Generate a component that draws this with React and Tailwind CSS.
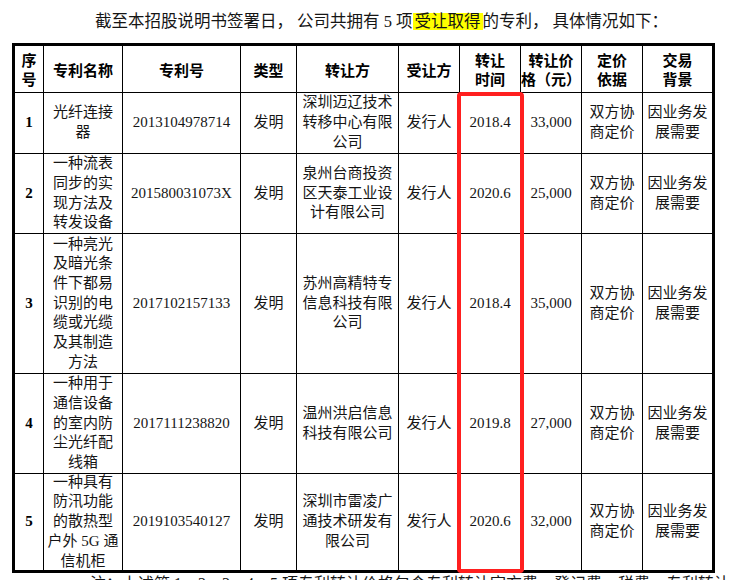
import React from "react";

const rows = [
    {
        no: "1",
        name: ["光纤连接", "器"],
        patent: "2013104978714",
        from: ["深圳迈辽技术", "转移中心有限", "公司"],
        date: "2018.4",
        price: "33,000",
    },
    {
        no: "2",
        name: ["一种流表", "同步的实", "现方法及", "转发设备"],
        patent: "201580031073X",
        from: ["泉州台商投资", "区天泰工业设", "计有限公司"],
        date: "2020.6",
        price: "25,000",
    },
    {
        no: "3",
        name: ["一种亮光", "及暗光条", "件下都易", "识别的电", "缆或光缆", "及其制造", "方法"],
        patent: "2017102157133",
        from: ["苏州高精特专", "信息科技有限", "公司"],
        date: "2018.4",
        price: "35,000",
    },
    {
        no: "4",
        name: ["一种用于", "通信设备", "的室内防", "尘光纤配", "线箱"],
        patent: "2017111238820",
        from: ["温州洪启信息", "科技有限公司"],
        date: "2019.8",
        price: "27,000",
    },
    {
        no: "5",
        name: ["一种具有", "防汛功能", "的散热型", "户外 5G 通", "信机柜"],
        patent: "2019103540127",
        from: ["深圳市雷凌广", "通技术研发有", "限公司"],
        date: "2020.6",
        price: "32,000",
    },
];

const headers = [
    ["序", "号"],
    ["专利名称"],
    ["专利号"],
    ["类型"],
    ["转让方"],
    ["受让方"],
    ["转让", "时间"],
    ["转让价", "格（元）"],
    ["定价", "依据"],
    ["交易", "背景"],
];

function Lines({ lines }) {
    return (
        <div>
            {lines.map((l, i) => (
                <div key={i} className="whitespace-nowrap">{l}</div>
            ))}
        </div>
    );
}

function Cell({ children, last, bottom, className = "" }) {
    return (
        <div
            className={
                "flex items-center justify-center text-center border-black " +
                (last ? "" : "border-r ") +
                (bottom ? "" : "border-b ") +
                className
            }
        >
            {children}
        </div>
    );
}

export default function App() {
    return (
        <div
            className="relative bg-white text-[#151515]"
            style={{ fontFamily: '"Liberation Serif", "Noto Sans CJK SC", serif' }}
        >
            <div className="h-[43px] flex items-center pl-[95px] text-[16.5px] leading-[20px] whitespace-nowrap">
                截至本招股说明书签署日<span className="tracking-[4px]">，</span>公司共拥有 5 项
                <span className="inline-block bg-[#ffff00] leading-[17px] px-[2px]">受让取得</span>
                的专利<span className="tracking-[4px]">，</span>具体情况如下：
            </div>

            <div className="ml-[12px] w-[703px] border-[3px] border-black grid grid-cols-[29px_79px_118px_56px_102px_61px_61px_61px_61px_69px] grid-rows-[47px_61px_80px_140px_100px_96px] text-[15px] leading-[19.7px]">
                {headers.map((h, i) => (
                    <Cell key={i} last={i === 9} className="font-bold text-black leading-[19px]">
                        <div style={{ fontFamily: '"Noto Sans CJK SC", sans-serif' }}>
                            <Lines lines={h} />
                        </div>
                    </Cell>
                ))}
                {rows.map((r, ri) => {
                    const b = ri === rows.length - 1;
                    return (
                        <React.Fragment key={r.no}>
                            <Cell bottom={b} className="font-bold text-black">{r.no}</Cell>
                            <Cell bottom={b}><Lines lines={r.name} /></Cell>
                            <Cell bottom={b}>{r.patent}</Cell>
                            <Cell bottom={b}>发明</Cell>
                            <Cell bottom={b}><Lines lines={r.from} /></Cell>
                            <Cell bottom={b}>发行人</Cell>
                            <Cell bottom={b}>{r.date}</Cell>
                            <Cell bottom={b}>{r.price}</Cell>
                            <Cell bottom={b}><Lines lines={["双方协", "商定价"]} /></Cell>
                            <Cell bottom={b} last><Lines lines={["因业务发", "展需要"]} /></Cell>
                        </React.Fragment>
                    );
                })}
            </div>

            <div className="pl-[90px] pt-[1px] text-[16px] leading-[20px] whitespace-nowrap">
                注：上述第 1、2、3、4、5 项专利转让价格包含专利转让官方费、登记费、税费、专利转让费。
            </div>

            <div className="absolute left-[457px] top-[92px] w-[67px] h-[481px] border-[4px] border-[#ff1f1f] rounded-[4px]" />
        </div>
    );
}
